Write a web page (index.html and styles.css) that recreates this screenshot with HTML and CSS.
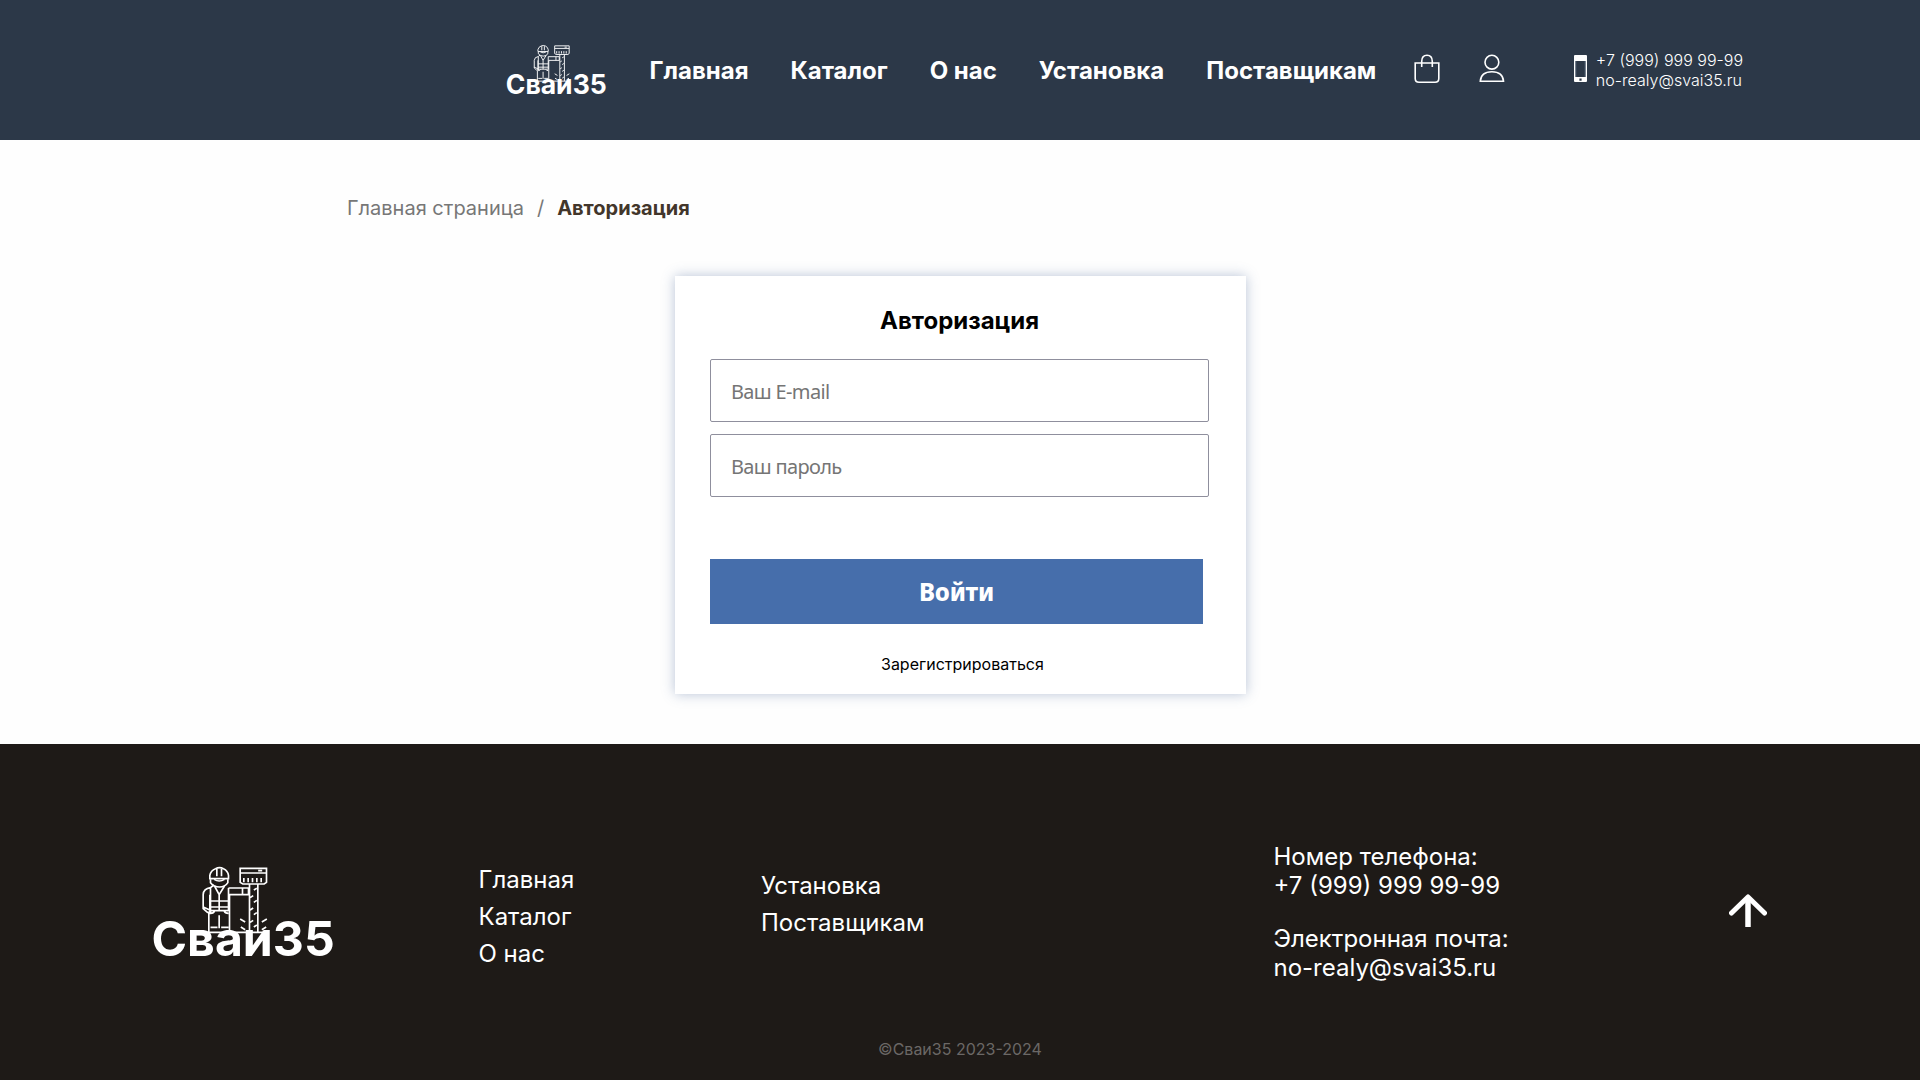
FILE: index.html
```html
<!DOCTYPE html>
<html lang="ru">
<head>
<meta charset="utf-8">
<title>Авторизация — Сваи35</title>
<link rel="stylesheet" href="styles.css">
</head>
<body>
<svg width="0" height="0" class="sprite" aria-hidden="true">
  <symbol id="worker" viewBox="30 45 560 285">
    <g fill="none" stroke="currentColor" stroke-width="5">
      <path d="M209 86V76q3-15 17-20q12-6 24 0q13 6 15 20V86zM230 57V79M244 57V79"/>
      <path d="M211 88V98Q221 111 238 111Q255 111 263 98V88M222 88Q237 98 253 88"/>
      <path d="M221 105L211 113Q190 116 189 134V176L202 187H209V134M211 114V185M223 108L237 134L253 108M265 114V183M237 134V182M211 153H265M211 171H265M189 171L209 180M265 114H325V134H268V247M307 114V134M211 182H265M211 182V190Q221 190 223 183M265 190Q254 190 252 183M206 190V247M237 196V235M211 232H232M243 232H265M206 247H380"/>
      <path d="M300 55H379V97L372 102H308L300 97ZM300 69H379M354 62H366M311 84V97M324 84V97M337 84V97M350 84V97M363 84V97"/>
      <path d="M328 102V246M353 102V246M341 120L350 115M330 143L339 137M341 157L350 151M330 180L339 174M341 194L350 188M330 217L339 211M341 231L350 225M300 207L315 216M302 231L315 239M380 207L365 216M378 231L365 239"/>
    </g>
  </symbol>
</svg>
<header class="header">
  <svg class="header-logo" viewBox="30 45 560 285"><use href="#worker" x="30" y="45" width="560" height="285"/><text x="34" y="318" class="logo-text">Сваи35</text></svg>
  <nav class="nav">
    <a>Главная</a><a>Каталог</a><a>О нас</a><a>Установка</a><a>Поставщикам</a>
  </nav>
  <div class="actions">
    <svg width="26" height="30" viewBox="0 0 26 30"><g fill="none" stroke="currentColor" stroke-width="1.6"><path d="M1.2 9H24.8V24.5Q24.8 28.2 21 28.2H5Q1.2 28.2 1.2 24.5Z"/><path d="M7.7 13V7.5Q7.7 1.2 13 1.2Q18.3 1.2 18.3 7.5V13"/></g></svg>
    <svg width="26" height="30" viewBox="0 0 26 30"><g fill="none" stroke="currentColor" stroke-width="1.6"><circle cx="12.9" cy="8.2" r="6.9"/><path d="M1.3 27.2Q2 17.8 12.9 17.8Q23.8 17.8 24.5 27.2Z"/></g></svg>
  </div>
  <div class="contact">
    <svg width="14" height="28" viewBox="0 0 14 28"><path fill="#fff" fill-rule="evenodd" d="M1 0H12Q13 0 13 1V26Q13 27 12 27H1Q0 27 0 26V1Q0 0 1 0ZM1.500 6V22H11.500V6ZM5.400 23.500V25.700H7.600V23.500Z"/><path fill="#57677a" d="M1.500 6H2.300V22H1.500ZM10.700 6H11.500V22H10.700Z"/></svg>
    <p>+7 (999) 999 99-99<br>no-realy@svai35.ru</p>
  </div>
</header>
<main class="main">
  <div class="crumbs"><a>Главная страница</a><span>/</span><b>Авторизация</b></div>
  <form class="card">
    <h1>Авторизация</h1>
    <input type="email" placeholder="Ваш E-mail">
    <input type="password" placeholder="Ваш пароль">
    <button type="button">Войти</button>
    <a class="register">Зарегистрироваться</a>
  </form>
</main>
<footer class="footer">
  <div class="footer-row">
    <svg class="footer-logo" viewBox="30 45 560 285"><use href="#worker" x="30" y="45" width="560" height="285"/><text x="34" y="318" class="logo-text">Сваи35</text></svg>
    <nav class="links links-first"><a>Главная</a><a>Каталог</a><a>О нас</a></nav>
    <nav class="links links-second"><a>Установка</a><a>Поставщикам</a></nav>
    <div class="footer-contact">
      <p>Номер телефона:<br>+7 (999) 999 99-99</p>
      <p>Электронная почта:<br>no-realy@svai35.ru</p>
    </div>
    <svg class="up" width="38" height="34" viewBox="0 0 38 34"><path d="M2.500 19L19 3L35.500 19" fill="none" stroke="#fff" stroke-width="5" stroke-linecap="round" stroke-linejoin="round"/><path d="M19 3V33" stroke="#fff" stroke-width="5.500"/></svg>
  </div>
  <p class="copy">©Сваи35 2023-2024</p>
</footer>
</body>
</html>
```
FILE: styles.css
```css
* { box-sizing: border-box; margin: 0; padding: 0; }
body { font-family: Inter, sans-serif; background: #fefefe; height: 1080px; display: flex; flex-direction: column; overflow: hidden; }
svg { display: block; flex: none; }
.sprite { position: absolute; }
.logo-text { font: 700 144.5px Inter, sans-serif; fill: currentColor; }
.header { height: 140px; background: #2c3848; color: #fff; display: flex; align-items: center; padding-left: 505px; }
.header-logo { width: 103px; height: 52.4px; }
.nav { display: flex; gap: 42px; margin-left: 41.5px; font-size: 24px; font-weight: 700; white-space: nowrap; }
.actions { display: flex; gap: 39px; margin: 0 0 2px 37.5px; }
.contact { display: flex; align-items: center; gap: 8px; margin-left: 69px; font-size: 16px; line-height: 20px; font-weight: 300; white-space: nowrap; }
.contact svg { margin-bottom: 2px; }
.main { height: 604px; flex: none; padding-top: 56px; }
.crumbs { display: flex; padding-left: 347px; font-size: 20px; line-height: 24px; color: #777; }
.crumbs span { margin: 0 13px; }
.crumbs b { color: #42362b; }
.card { width: 571px; height: 418px; margin: 56px 0 0 675px; padding: 29px 35px 0; background: #fff; box-shadow: 0 0 12px rgba(70, 100, 150, .38); display: flex; flex-direction: column; align-items: flex-start; }
.card h1 { font-size: 24px; line-height: 32px; margin: 0 0 22px 170px; }
.card input { width: 499px; height: 63px; flex: none; border: 1px solid #8f8f9d; border-radius: 2px; margin-bottom: 12px; padding: 1px 20px 0; font: 20px "Noto Sans", sans-serif; letter-spacing: -.65px; background: #fff; }
.card input::placeholder { color: #757575; }
.card button { width: 493px; height: 65px; flex: none; margin-top: 50px; padding-bottom: 1px; border: 0; background: #466eab; color: #fff; font: 800 24px "Noto Sans", sans-serif; letter-spacing: -.2px; }
.register { font-size: 16px; line-height: 20px; margin: 30px 0 0 171px; }
.footer { height: 336px; flex: none; background: #1e1a17; color: #fff; }
.footer-row { display: flex; height: 294px; padding-left: 150px; align-items: flex-start; font-size: 24px; white-space: nowrap; }
.footer-logo { width: 187px; height: 95px; margin-top: 121px; }
.links { display: flex; flex-direction: column; line-height: 37px; }
.links-first { width: 282.5px; margin: 117px 0 0 141.5px; }
.links-second { width: 512.5px; margin-top: 123px; }
.footer-contact { width: 455.5px; line-height: 29px; margin-top: 98px; }
.footer-contact p + p { margin-top: 24px; }
.up { margin-top: 150px; }
.copy { text-align: center; font-size: 16px; line-height: 20px; color: #6b6866; margin-top: 1px; }
```
